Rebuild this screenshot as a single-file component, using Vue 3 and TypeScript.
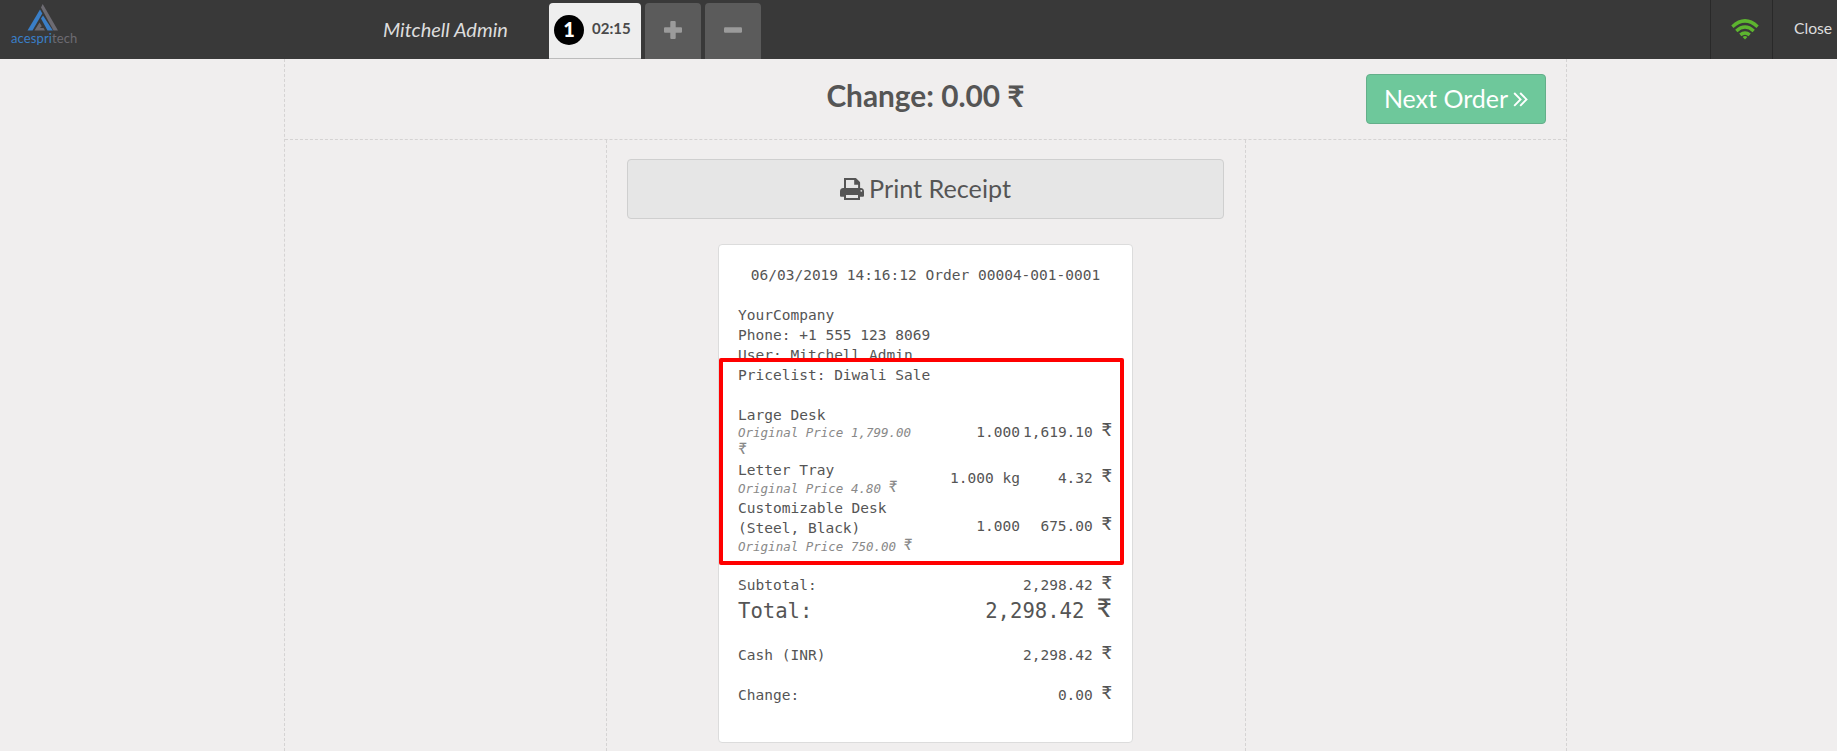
<script setup lang="ts">
interface OrderLine {
  name: string[]
  original: string[]
  qty: string
  price: string
  size: string
}

const lines: OrderLine[] = [
  { name: ['Large Desk'], original: ['Original Price 1,799.00', '₹'], qty: '1.000', price: '1,619.10', size: 'tall' },
  { name: ['Letter Tray'], original: ['Original Price 4.80 ₹'], qty: '1.000 kg', price: '4.32', size: 'short' },
  { name: ['Customizable Desk', '(Steel, Black)'], original: ['Original Price 750.00 ₹'], qty: '1.000', price: '675.00', size: 'full' },
]

const header: string[] = ['YourCompany', 'Phone: +1 555 123 8069', 'User: Mitchell Admin', 'Pricelist: Diwali Sale']
</script>

<template>
  <div class="pos">
    <header class="topbar">
      <div class="branding">
        <svg class="mark" viewBox="0 0 32 27" width="32" height="27">
          <path d="M14 3.5 L15.7 0 L31 26.5 H26.5 Z" fill="#6d6b72" />
          <path d="M0.5 26.5 L13 5.5 L15.3 9.5 L5.5 26.5 Z" fill="#3a7fc8" />
          <path d="M14 14.5 L16 11.5 L25.8 26.5 H20.5 Z" fill="#3a7fc8" />
          <path d="M7.5 26.5 L12.5 18.5 L14.8 22.3 L12.8 24 H16.5 L18 26.5 Z" fill="#6d6b72" />
        </svg>
        <div class="brand"><span>acespri</span>tech</div>
      </div>
      <div class="username">Mitchell Admin</div>
      <nav class="orders">
        <button class="tab active"><span class="num">1</span><span class="time">02:15</span></button>
        <button class="tab square">
          <svg viewBox="0 0 18 18" width="18" height="18"><path d="M7.3 0h3.4q1 0 1 1v5.3H17q1 0 1 1v3.4q0 1-1 1h-5.3V17q0 1-1 1H7.3q-1 0-1-1v-5.3H1q-1 0-1-1V7.3q0-1 1-1h5.3V1q0-1 1-1z" fill="#9b9b9b" /></svg>
        </button>
        <button class="tab square">
          <svg viewBox="0 0 18 18" width="18" height="18"><rect y="6.3" width="18" height="5.4" rx="1.2" fill="#9b9b9b" /></svg>
        </button>
      </nav>
      <div class="status">
        <svg viewBox="0 0 28 21" width="28" height="21">
          <g fill="none" stroke="#5db52f" stroke-width="3.4">
            <path d="M1.4 7.7 Q14 -3.9 26.6 7.7" />
            <path d="M5.3 11.9 Q14 4.2 22.7 11.9" />
            <path d="M9.3 15.9 Q14 11.9 18.7 15.9" />
          </g>
          <path d="M11.6 18 Q14 16.1 16.4 18 L14 20.6 Z" fill="#5db52f" />
        </svg>
      </div>
      <div class="close">Close</div>
    </header>

    <main class="screen">
      <section class="top">
        <h1>Change: 0.00 <span>₹</span></h1>
        <button class="next">
          <span>Next Order</span>
          <svg viewBox="0 0 15 15" width="15" height="15"><path d="M1.2 1l6.3 6.4-6.3 6.4M7.2 1l6.3 6.4-6.3 6.4" fill="none" stroke="#fff" stroke-width="1.9" /></svg>
        </button>
      </section>
      <section class="center">
        <button class="print">
          <svg viewBox="0 0 24 22" width="24" height="22">
            <path d="M5 11V1h10.3l3.8 3.8V11" fill="none" stroke="#555" stroke-width="2" />
            <path d="M14.2 0.5h2l3.8 3.8v2.4h-5.8z" fill="#555" />
            <path d="M0 13.5Q0 10 3.3 10h17.4Q24 10 24 13.5v4.3q0 1-1 1h-3V16H4v2.8H1q-1 0-1-1z" fill="#555" />
            <path d="M5 16v5h14v-5z" fill="#e6e6e6" stroke="#555" stroke-width="2" />
            <circle cx="21.3" cy="12.8" r="0.9" fill="#e6e6e6" />
          </svg>
          <span>Print Receipt</span>
        </button>
        <article class="receipt">
          <div class="stamp">06/03/2019 14:16:12 Order 00004-001-0001</div>
          <div class="company">
            <div v-for="h in header" :key="h">{{ h }}</div>
          </div>
          <div class="items">
            <div v-for="l in lines" :key="l.name[0]" class="item" :class="l.size">
              <div class="product">
                <div v-for="n in l.name" :key="n">{{ n }}</div>
                <em v-for="o in l.original" :key="o">{{ o.replace('₹', '') }}<i v-if="o.includes('₹')" class="cur">₹</i></em>
              </div>
              <div class="qty">{{ l.qty }}</div>
              <div class="amount">{{ l.price }} <i class="cur">₹</i></div>
            </div>
          </div>
          <div class="row"><span>Subtotal:</span><span>2,298.42 <i class="cur">₹</i></span></div>
          <div class="row total"><span>Total:</span><span>2,298.42 <i class="cur">₹</i></span></div>
          <div class="row cash"><span>Cash (INR)</span><span>2,298.42 <i class="cur">₹</i></span></div>
          <div class="row change"><span>Change:</span><span>0.00 <i class="cur">₹</i></span></div>
          <div class="highlight"></div>
        </article>
      </section>
    </main>
  </div>
</template>

<style>
body { margin: 0; overflow: hidden; }
</style>

<style scoped>
* { box-sizing: border-box; }
.pos { width: 100%; height: 751px; display: flex; flex-direction: column; background: #f0eeee; color: #555; font-family: Lato, sans-serif; overflow: hidden; }
button { font: inherit; border: 0; margin: 0; padding: 0; }
.topbar { height: 59px; flex: none; display: flex; background: #393939; color: #ddd; }
.branding { width: 383px; padding: 4px 0 0 11px; }
.mark { display: block; margin-left: 16px; }
.brand { font: 13px/14px Lato, sans-serif; letter-spacing: 0.12px; color: #6d6b72; }
.brand span { color: #3a7fc8; }
.username { width: 166px; font-size: 20px; line-height: 59px; font-style: italic; }
.orders { display: flex; gap: 4px; padding-top: 3px; flex: 1; }
.tab { height: 56px; border-radius: 4px 4px 0 0; display: flex; align-items: center; }
.active { width: 92px; background: #eee; border-bottom: 1px solid #bbb; padding: 0 0 2px 5px; font-weight: bold; color: #4a4a4a; }
.num { width: 30px; height: 30px; border-radius: 50%; background: #000; color: #fff; font-size: 20px; font-weight: 900; line-height: 29px; text-align: center; }
.time { font-size: 15px; margin: -3px 0 0 8px; }
.square { width: 56px; background: #5b5b5b; justify-content: center; padding-bottom: 2px; }
.status { width: 63px; border: 1px solid #292929; border-width: 0 1px; padding: 19px 0 0 20px; }
.close { width: 64px; padding-left: 21px; font-size: 15.7px; line-height: 57px; }
.screen { width: 1283px; flex: 1; min-height: 0; margin-left: 284px; border: 1px dashed #d5d3d3; border-width: 0 1px; display: flex; flex-direction: column; align-items: center; }
.top { width: 100%; height: 81px; flex: none; display: grid; grid-template-columns: 1fr auto 1fr; border-bottom: 1px dashed #d5d3d3; }
h1 { grid-column: 2; margin: 0; font-size: 29.8px; line-height: 36px; padding-top: 19px; white-space: nowrap; }
.next { grid-column: 3; justify-self: end; width: 180px; height: 50px; margin: 15px 20px 0 0; border: 1px solid #64af8a; border-radius: 4px; background: #6ec89b; color: #fff; font-size: 25px; line-height: 30px; padding-bottom: 2px; display: flex; justify-content: center; align-items: center; gap: 5px; white-space: nowrap; }
.next svg { margin-top: 3px; }
.center { width: 640px; flex: 1; border: 1px dashed #d5d3d3; border-width: 0 1px; display: flex; flex-direction: column; align-items: center; padding-top: 19px; }
.print { width: 597px; height: 60px; flex: none; border: 1px solid #cfcfcf; border-radius: 4px; background: #e6e6e6; color: #555; font-size: 25.2px; line-height: 30px; padding-bottom: 2px; display: flex; justify-content: center; align-items: center; gap: 5px; }
.print svg { margin-top: 1px; }
.receipt { position: relative; width: 415px; height: 499px; flex: none; margin-top: 25px; border: 1px solid #dcdcdc; border-radius: 4px; background: #fff; padding: 20px 19px; font: 14.53px/20px "DejaVu Sans Mono", monospace; white-space: pre; }
.stamp { text-align: center; }
.company { margin: 20px 0 19px; }
.item { display: flex; align-items: center; }
.tall { height: 55px; }
.tall em { position: relative; top: -1px; }
.tall em + em { top: 0; }
.short { height: 38px; }
.full { height: 58px; }
.product { width: 188px; }
em { display: block; font-size: 12.5px; line-height: 17px; color: #888; }
.qty { width: 94px; text-align: right; }
.amount { flex: 1; text-align: right; }
.cur { font-family: Lato, sans-serif; font-size: 1.25em; line-height: 0; font-weight: 500; font-style: normal; position: relative; top: -1px; margin-right: 0.05em; }
em .cur { font-weight: normal; font-style: italic; }
.row { display: flex; justify-content: space-between; }
.items { height: 171px; }
.total { font-size: 20.6px; line-height: 32px; }
.cash { margin-top: 18px; }
.change { margin-top: 20px; }
.highlight { position: absolute; left: 0; top: 113px; width: 405px; height: 207px; border: 4px solid #f00; border-radius: 2px; }
</style>
